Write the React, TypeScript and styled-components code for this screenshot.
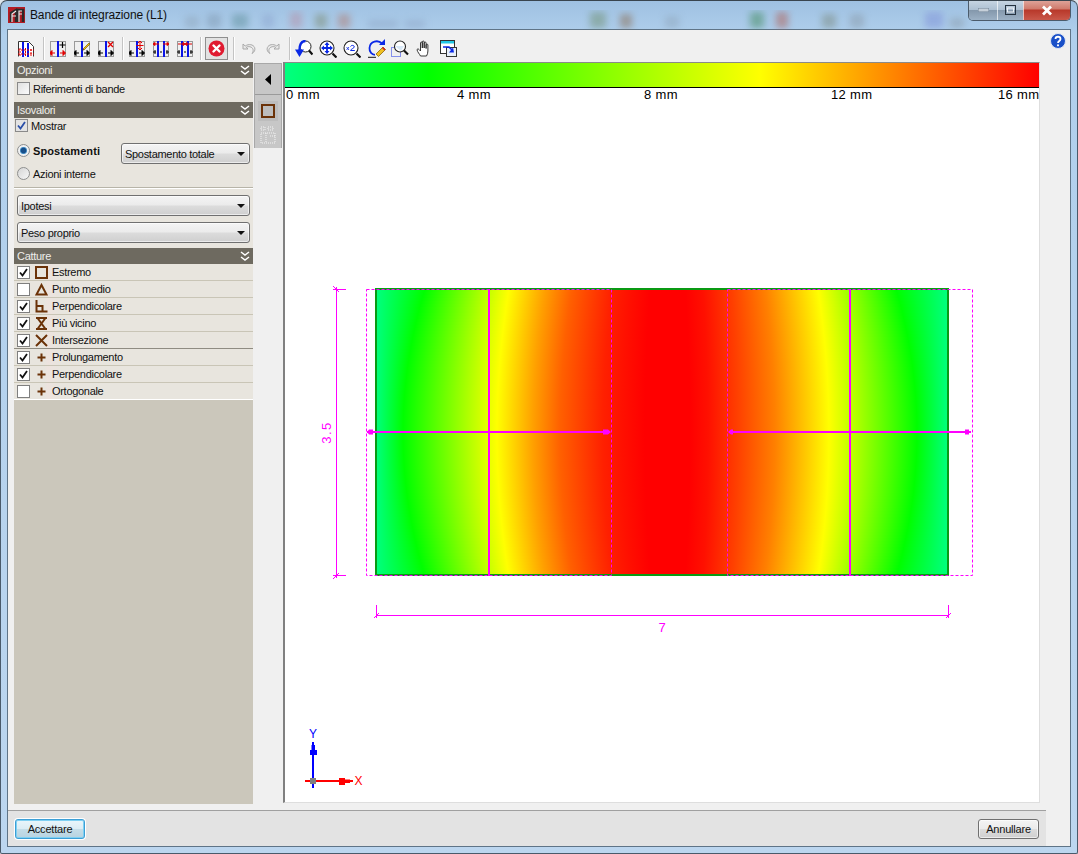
import React from 'react';
import styled, { createGlobalStyle } from 'styled-components';

const FONT = '"Liberation Sans", Arial, sans-serif';
const BROWN = '#6b3208';

const GlobalStyle = createGlobalStyle`
  html, body { margin: 0; padding: 0; background: #dfe6ec; }
  body { font-family: ${FONT}; font-size: 11px; letter-spacing: -0.3px; color: #111; }
`;

const Frame = styled.div`
  width: 1078px;
  height: 854px;
  box-sizing: border-box;
  display: flex;
  flex-direction: column;
  position: relative;
  overflow: hidden;
  padding: 0 6px 6px;
  border-radius: 7px 7px 2px 2px;
  border: 1px solid #4a5a6a;
  border-top-color: #39454f;
  background: linear-gradient(180deg, #9fc1e2 0%, #b0cfec 4%, #bcd6ef 100%);
`;

const TitleBar = styled.div`
  height: 28px;
  flex: none;
  display: flex;
  align-items: center;
  gap: 5px;
  padding-left: 1px;
  position: relative;
  color: #101010;
`;

const TitleGlass = styled.svg`
  position: absolute;
  left: -7px;
  top: -1px;
`;

const TitleText = styled.span`
  position: relative;
  font-size: 12px;
  letter-spacing: -0.15px;
`;

const AppIcon = styled.svg`
  position: relative;
  flex: none;
`;

const WindowButtons = styled.div`
  position: absolute;
  top: -1px;
  right: 0;
  height: 20px;
  display: flex;
  border: 1px solid #4b5b6b;
  border-top: none;
  border-radius: 0 0 5px 5px;
  overflow: hidden;
`;

const WinButton = styled.div<{ $w: number; $close?: boolean }>`
  width: ${p => p.$w}px;
  display: flex;
  align-items: center;
  justify-content: center;
  border-left: 1px solid rgba(255, 255, 255, 0.65);
  background: ${p =>
    p.$close
      ? 'linear-gradient(180deg, #e0a79d 0%, #d07a6c 45%, #b8382a 50%, #c9584a 100%)'
      : 'linear-gradient(180deg, #c8d6e3 0%, #adc0d2 48%, #8498ac 52%, #9cb1c5 100%)'};
  &:first-child { border-left: none; }
`;

const Client = styled.div`
  flex: 1;
  min-height: 0;
  display: flex;
  flex-direction: column;
  background: #f0f0f0;
  border: 1px solid #5f7487;
`;

const Toolbar = styled.div`
  height: 32px;
  flex: none;
  display: flex;
  align-items: center;
  padding: 5px 0 0 6px;
  box-sizing: border-box;
  position: relative;
`;

const ToolButton = styled.div<{ $active?: boolean }>`
  width: ${p => (p.$active ? 23 : 24)}px;
  height: ${p => (p.$active ? 23 : 24)}px;
  box-sizing: border-box;
  display: flex;
  align-items: center;
  justify-content: center;
  border: ${p => (p.$active ? '1px solid #8f8f8f' : 'none')};
  background: ${p => (p.$active ? '#e2e2e2' : 'transparent')};
`;

const ToolSep = styled.div<{ $l: number; $r: number }>`
  width: 1px;
  height: 23px;
  background: #c4c4c4;
  box-shadow: 1px 0 0 #fff;
  margin: 0 ${p => p.$r}px 0 ${p => p.$l}px;
`;

const HelpIcon = styled.svg`
  position: absolute;
  right: 4px;
  top: 3px;
`;

const Main = styled.div`
  flex: 1;
  min-height: 0;
  display: flex;
  padding-left: 6px;
`;

const Sidebar = styled.div`
  width: 239px;
  flex: none;
  display: flex;
  flex-direction: column;
  margin-bottom: 6px;
  background: #cbc7bb;
`;

const SectionHead = styled.div`
  height: 16px;
  flex: none;
  display: flex;
  align-items: center;
  justify-content: space-between;
  padding: 0 3px;
  background: #6e6a60;
  color: #eeeeea;
`;

const SectionBody = styled.div<{ $h: number }>`
  height: ${p => p.$h}px;
  flex: none;
  box-sizing: border-box;
  background: #e8e5de;
`;

const OptionRow = styled.div<{ $pad: number; $top?: number }>`
  display: flex;
  align-items: center;
  gap: 3px;
  height: 15px;
  padding: ${p => p.$top ?? 0}px 0 0 ${p => p.$pad}px;
`;

const Box = styled.span<{ $grey?: boolean }>`
  width: 11px;
  height: 11px;
  flex: none;
  display: inline-flex;
  align-items: center;
  justify-content: center;
  border: 1px solid #8a8a8a;
  background: ${p => (p.$grey ? '#e3e3e3' : 'linear-gradient(135deg, #e0e0e0, #fbfbfb)')};
`;

const Radio = styled.span<{ $on?: boolean }>`
  width: 11px;
  height: 11px;
  flex: none;
  border-radius: 50%;
  border: 1px solid #8e8f8f;
  background: ${p =>
    p.$on
      ? 'radial-gradient(circle, #174f8a 0 2.4px, #5fa6d8 3.4px, #eef0f2 4px)'
      : 'linear-gradient(135deg, #d5d5d5, #f7f7f7)'};
`;

const IsoGrid = styled.div`
  display: grid;
  grid-template-columns: 104px 129px;
  padding: 10px 0 0 3px;
  row-gap: 2px;
  align-items: start;
`;

const RadioRow = styled.div<{ $bold?: boolean }>`
  display: flex;
  align-items: center;
  gap: 3px;
  height: 15px;
  font-weight: ${p => (p.$bold ? 700 : 400)};
  letter-spacing: ${p => (p.$bold ? '0.1px' : '-0.3px')};
`;

const RadioLabel = styled.span`
  white-space: nowrap;
`;

const Select = styled.div<{ $w: number }>`
  width: ${p => p.$w}px;
  height: 21px;
  box-sizing: border-box;
  border: 1px solid #707070;
  border-radius: 3px;
  display: flex;
  align-items: center;
  justify-content: space-between;
  padding: 0 4px 0 3px;
  background: linear-gradient(180deg, #f4f4f4 0%, #ebebeb 48%, #dcdcdc 52%, #cfcfcf 100%);
  box-shadow: inset 0 0 0 1px rgba(255, 255, 255, 0.6);
`;

const Caret = styled.span`
  width: 0;
  height: 0;
  border-left: 4px solid transparent;
  border-right: 4px solid transparent;
  border-top: 4px solid #111;
`;

const SelectStack = styled.div`
  height: 61px;
  flex: none;
  box-sizing: border-box;
  background: #e8e5de;
  border-top: 1px solid #b7b4a8;
  box-shadow: inset 0 1px 0 #fff;
  display: flex;
  flex-direction: column;
  gap: 6px;
  padding: 7px 0 0 3px;
`;

const SnapRow = styled.div<{ $line?: string }>`
  height: 17px;
  flex: none;
  box-sizing: border-box;
  display: flex;
  align-items: center;
  padding-left: 3px;
  background: linear-gradient(90deg, #e8e5de 0 30px, #ede3de 34px, #e8e5de 46px);
  border-bottom: 1px solid ${p => p.$line ?? '#c9c5b6'};
`;

const SnapBox = styled.span`
  width: 11px;
  height: 11px;
  flex: none;
  display: inline-flex;
  align-items: center;
  justify-content: center;
  border: 1px solid #7f7f7f;
  background: #fff;
`;

const SnapGlyph = styled.svg`
  flex: none;
  margin: 0 4px 0 5px;
`;

const Strip = styled.div`
  width: 28px;
  height: 85px;
  flex: none;
  margin: 1px 0 0 1px;
  box-sizing: border-box;
  background: #c7c7c7;
  border: 1px solid #a8a8a8;
  border-bottom: none;
  display: flex;
  flex-direction: column;
  align-items: center;
`;

const StripToggle = styled.div`
  width: 100%;
  height: 30px;
  flex: none;
  display: flex;
  align-items: center;
  justify-content: center;
  border-bottom: 1px solid #9a9a9a;
`;

const StripTool = styled.div<{ $on?: boolean }>`
  width: 20px;
  height: 20px;
  margin-top: ${p => (p.$on ? 6 : 4)}px;
  display: flex;
  align-items: center;
  justify-content: center;
  background: ${p => (p.$on ? '#bdbdbd' : 'transparent')};
`;

const Canvas = styled.div`
  width: 757px;
  flex: none;
  margin: 0 0 7px 1px;
  box-sizing: border-box;
  background: #fff;
  border-left: 2px solid #808080;
  border-top: 1px solid #8a8a8a;
  border-right: 1px solid #dedede;
  border-bottom: 1px solid #dedede;
  display: flex;
  flex-direction: column;
`;

const LegendBar = styled.div`
  height: 25px;
  flex: none;
  box-sizing: border-box;
  border-bottom: 1px solid #000;
  background: linear-gradient(90deg, #00ff80 0%, #00ff00 19%, #ffff00 63%, #ff0000 100%);
`;

const LegendScale = styled.div`
  display: grid;
  grid-template-columns: 171px 187px 187px 167px auto;
  padding-left: 1px;
  font-size: 13px;
  line-height: 14px;
  letter-spacing: 0.35px;
  white-space: nowrap;
  color: #000;
`;

const Drawing = styled.svg`
  flex: none;
  display: block;
`;

const Footer = styled.div`
  height: 36px;
  flex: none;
  margin-right: 24px;
  box-sizing: border-box;
  border-top: 1px solid #a0a0a0;
  background: #e3e3e3;
  display: flex;
  align-items: center;
  justify-content: space-between;
  padding: 0 7px;
`;

const DialogButton = styled.div<{ $main?: boolean }>`
  height: 20px;
  box-sizing: border-box;
  width: ${p => (p.$main ? 70 : 61)}px;
  display: flex;
  align-items: center;
  justify-content: center;
  border-radius: 3px;
  letter-spacing: -0.2px;
  border: 1px solid ${p => (p.$main ? '#3c9fd6' : '#707070')};
  background: ${p =>
    p.$main
      ? 'linear-gradient(180deg, #eaf6fb 0%, #dcedf5 48%, #c4dde8 52%, #b8d3e0 100%)'
      : 'linear-gradient(180deg, #f4f4f4 0%, #ebebeb 48%, #dcdcdc 52%, #cfcfcf 100%)'};
  box-shadow: ${p => (p.$main ? '0 0 0 1px #fff, inset 0 0 0 1px #7fd0f2' : 'inset 0 0 0 1px rgba(255,255,255,.6)')};
`;

const UndoSvg = styled.svg<{ $flip?: boolean }>`
  transform: ${p => (p.$flip ? 'scaleX(-1)' : 'none')};
`;

// --- toolbar drawings

const Dots = () => (
  <rect x="0.5" y="0.5" width="15" height="15" fill="none" stroke="#444" strokeDasharray="1 1" />
);

const Arrow = ({ x, y, dir, color }: { x: number; y: number; dir: 1 | -1; color: string }) => (
  <path d={`M${x} ${y}h${dir * 3}M${x + dir * 3} ${y - 2.5}v5l${dir * 2.5}-2.5z`} stroke={color} fill={color} strokeWidth="1" />
);

const Bars = ({ xs }: { xs: number[] }) => (
  <>
    {xs.map(x => (
      <rect key={x} x={x} y="0" width="2" height="16" fill="#0a14e6" />
    ))}
  </>
);

type BandKind = 'add' | 'edit' | 'remove' | 'move' | 'spread' | 'gather';

const BandIcon = ({ kind }: { kind: BandKind }) => {
  const double = kind === 'spread' || kind === 'gather';
  const c = kind === 'add' ? '#e00000' : '#000';
  return (
    <svg width="16" height="16" viewBox="0 0 16 16">
      <Dots />
      {double ? <Bars xs={[4, 10]} /> : <Bars xs={[7]} />}
      {double ? (
        <>
          <path d="M0 11h3M2 9v4M13 11h3M14 9v4M7 11h2" stroke="#000" fill="none" />
          <path
            d={
              kind === 'spread'
                ? 'M2 3h4M2 1.500v3L0 3zM10 3h4M14 1.500v3L16 3z'
                : 'M1 3h5M6 1.500v3L8 3zM10 3h5M10 1.500v3L8 3z'
            }
            stroke="#e00000"
            fill="#e00000"
          />
        </>
      ) : (
        <>
          <Arrow x={5} y={12} dir={-1} color={c} />
          <Arrow x={10} y={12} dir={1} color={c} />
        </>
      )}
      {kind === 'add' && <path d="M12.500 1v6M9.500 4h6" stroke="#000" strokeWidth="1.200" />}
      {kind === 'edit' && (
        <>
          <path d="M9 8l6-6 1 1-6 6z" fill="#f3c21a" stroke="#7a5a00" strokeWidth="0.700" />
          <path d="M9 8l-1 2 2-1z" fill="#333" />
        </>
      )}
      {kind === 'remove' && <path d="M10 1l5 5M15 1l-5 5" stroke="#e00000" strokeWidth="1.300" />}
      {kind === 'move' && (
        <path d="M11 0v9M7.500 4.500h7M9 2l2-2 2 2M9 7l2 2 2-2" stroke="#e00000" fill="none" strokeWidth="1" />
      )}
    </svg>
  );
};

const BandsOverview = () => (
  <svg width="18" height="18" viewBox="0 0 18 18">
    <path d="M1.500 16.500V1.500h10l5 5v10" fill="#fff" stroke="#333" />
    <rect x="5" y="2" width="2" height="15" fill="#0a14e6" />
    <rect x="10" y="3" width="2" height="14" fill="#0a14e6" />
    <path d="M1 10h16M1 14h16M3 8v8M8.500 8v8M14 9v7" stroke="#e00000" strokeDasharray="2 1" fill="none" />
  </svg>
);

const StopIcon = () => (
  <svg width="17" height="17" viewBox="0 0 17 17">
    <circle cx="8.500" cy="8.500" r="8" fill="#e01a30" />
    <path d="M5.500 5.500l6 6M11.500 5.500l-6 6" stroke="#fff" strokeWidth="2.400" strokeLinecap="round" />
  </svg>
);

const UndoIcon = ({ flip }: { flip?: boolean }) => (
  <UndoSvg $flip={flip} width="14" height="12" viewBox="0 0 14 12">
    <path d="M1 1v5h5L4.300 4.300C6.500 3 10 3.500 11 6.500c.4 1.500-.2 3-1 4 2.400-1.300 3.500-3.700 2.600-6C11.300 1.500 7 .5 3.200 3z" fill="#e9e9e9" stroke="#a9a9a9" strokeWidth="1" />
  </UndoSvg>
);

const Lens = ({ cx = 7, cy = 7, r = 6 }: { cx?: number; cy?: number; r?: number }) => (
  <>
    <circle cx={cx} cy={cy} r={r} fill="#fff" stroke="#222" strokeWidth="1.100" />
    <path d={`M${cx + r - 1.500} ${cy + r - 1.500}l4 4`} stroke="#111" strokeWidth="2.200" />
  </>
);

const ZoomPrevious = () => (
  <svg width="18" height="18" viewBox="0 0 18 18">
    <circle cx="10.500" cy="6.500" r="5.500" fill="#fff" stroke="#222" />
    <path d="M14 10.500l3.500 4" stroke="#111" strokeWidth="2.200" />
    <path d="M10.500 1C6 1 4.500 5 4.500 10" fill="none" stroke="#0a28e6" strokeWidth="2.400" />
    <path d="M0 9.500h9L4.500 17z" fill="#0a28e6" />
  </svg>
);

const ZoomAll = () => (
  <svg width="18" height="18" viewBox="0 0 18 18">
    <Lens cx={8} cy={8} r={7} />
    <path d="M8 4v8M4 8h8" stroke="#0a28e6" strokeWidth="1.800" />
    <path d="M5.500 5L8 2l2.500 3zM5.500 11L8 14l2.500-3zM5 5.500L2 8l3 2.500zM11 5.500L14 8l-3 2.500z" fill="#0a28e6" />
  </svg>
);

const ZoomDouble = () => (
  <svg width="18" height="18" viewBox="0 0 18 18">
    <Lens cx={8} cy={8} r={7} />
    <path d="M3.500 7l2.500 3M6 7l-2.500 3" stroke="#0a28e6" strokeWidth="0.800" />
    <path d="M7.500 6.500c.5-1.500 3.800-1.500 3.800.3 0 1.400-3.300 2-3.800 3.700h4.300" stroke="#0a28e6" strokeWidth="1" fill="none" />
  </svg>
);

const ZoomRefresh = () => (
  <svg width="19" height="19" viewBox="0 0 19 19">
    <path d="M15 4.500C11 .5 3 2 2.500 9c-.3 4 2.500 6.500 5.500 6.800" fill="none" stroke="#0a28e6" strokeWidth="1.800" />
    <path d="M12 6h6V0z" fill="#0a28e6" />
    <path d="M9 15l7-7 2.500 2.500-7 7z" fill="#f0c020" stroke="#7a5a00" strokeWidth="0.700" />
    <path d="M1 18.300h8" stroke="#111" />
    <path d="M15.500 8.500l2.500 2.500" stroke="#d02020" strokeWidth="1.500" />
  </svg>
);

const ZoomWindow = () => (
  <svg width="18" height="18" viewBox="0 0 18 18">
    <rect x="0.500" y="7.500" width="9" height="9" fill="none" stroke="#1a30e6" strokeDasharray="1 1" />
    <Lens cx={9} cy={6.500} r={5.500} />
    <path d="M4 6h9l-3 5z" fill="#cfe3f5" opacity="0.800" />
  </svg>
);

const HandIcon = () => (
  <svg width="17" height="17" viewBox="0 0 16 17">
    <path d="M4 16c-1-2-3-4-3.400-6-.2-1.200 1.200-1.400 2-.4L4 11V3c0-1.300 1.800-1.300 1.800 0v5-6c0-1.300 1.900-1.300 1.900 0v6-5c0-1.300 1.900-1.300 1.900 0v5.500V5c0-1.200 1.800-1.200 1.800 0v6c0 2-.6 3.500-1.400 5z" fill="#fff" stroke="#222" strokeWidth="0.900" />
  </svg>
);

const ViewWindow = () => (
  <svg width="17" height="17" viewBox="0 0 17 17">
    <rect x="0.500" y="0.500" width="14" height="13" fill="#fff" stroke="#333" />
    <rect x="1" y="1" width="13" height="2.500" fill="#22c8e6" />
    <rect x="6.500" y="7.500" width="10" height="9" fill="#e8f0fa" stroke="#333" />
    <path d="M3 7h6l3 3" fill="none" stroke="#0a28e6" strokeWidth="1.600" />
    <path d="M9 12.500l5 0-1-5z" fill="#0a28e6" />
  </svg>
);

const Chevrons = () => (
  <svg width="10" height="11" viewBox="0 0 10 11">
    <path d="M1 1l4 3 4-3M1 6l4 3 4-3" fill="none" stroke="#fff" strokeWidth="1.500" />
  </svg>
);

const Tick = ({ color = '#111' }: { color?: string }) => (
  <svg width="9" height="9" viewBox="0 0 9 9">
    <path d="M1 4.500l2.500 3L8 1" fill="none" stroke={color} strokeWidth="1.800" />
  </svg>
);

type SnapKind = 'square' | 'triangle' | 'perp' | 'hour' | 'cross' | 'plus';

const SnapIcon = ({ kind }: { kind: SnapKind }) => (
  <SnapGlyph width="13" height="13" viewBox="0 0 13 13">
    {kind === 'square' && <rect x="1" y="1" width="11" height="11" fill="none" stroke={BROWN} strokeWidth="2" />}
    {kind === 'triangle' && <path d="M6.500 2L1.500 11.500h10z" fill="none" stroke={BROWN} strokeWidth="2" />}
    {kind === 'perp' && <path d="M1.500 0v11.500h11M1.500 6h6v5" fill="none" stroke={BROWN} strokeWidth="2" />}
    {kind === 'hour' && <path d="M1 1h11M1 12h11M2.500 1l8 11M10.500 1l-8 11" fill="none" stroke={BROWN} strokeWidth="2" />}
    {kind === 'cross' && <path d="M1 1l11 11M12 1L1 12" fill="none" stroke={BROWN} strokeWidth="2" />}
    {kind === 'plus' && <path d="M6.500 2.500v8M2.500 6.500h8" fill="none" stroke={BROWN} strokeWidth="2" />}
  </SnapGlyph>
);

// --- heat map

const lerp = (a: number, b: number, s: number) => a + (b - a) * s;

// colour, x at mid height, x at the top and bottom edges
const HEAT_STOPS: [string, number, number][] = [
  ['#00ff80', 376, 376],
  ['#00ff00', 403, 425],
  ['#ffff00', 497, 509],
  ['#ffa000', 533, 545],
  ['#ff6000', 560, 572],
  ['#ff2000', 603, 612],
  ['#ff1000', 622, 630],
  ['#ff0000', 645, 650],
  ['#ff0000', 690, 685],
  ['#ff1000', 708, 703],
  ['#ff4000', 738, 732],
  ['#ff8000', 775, 765],
  ['#ffff00', 829, 818],
  ['#00ff00', 917, 896],
  ['#00ff80', 948, 948],
];

const ROW_H = 3;
const rows = Array.from({ length: 96 }, (_, i) => i);

const HeatMap = () => (
  <>
    <defs>
      {rows.map(i => {
        const t = (i + 0.5 - rows.length / 2) / (rows.length / 2);
        const s = t * t;
        return (
          <linearGradient key={i} id={`heat${i}`} gradientUnits="userSpaceOnUse" x1="376" x2="948" y1="0" y2="0">
            {HEAT_STOPS.map(([color, mid, edge], k) => (
              <stop key={k} offset={(lerp(mid, edge, s) - 376) / 572} stopColor={color} />
            ))}
          </linearGradient>
        );
      })}
    </defs>
    {rows.map(i => (
      <rect key={i} x="376" y={289 + i * ROW_H} width="572" height={i === 95 ? 1 : ROW_H + 0.5} fill={`url(#heat${i})`} />
    ))}
  </>
);

const PINK = '#ff00ff';

const Plan = () => (
  // viewBox in window pixels so the drawing reads the same as the dialog
  <Drawing viewBox="285 102 754 700" width="754" height="700">
    <HeatMap />
    <rect x="376" y="289" width="572" height="286" fill="none" stroke="#0a9a14" strokeWidth="2" />

    <rect x="366.500" y="289.500" width="245" height="286" fill="none" stroke={PINK} strokeDasharray="3 2" />
    <rect x="727.500" y="289.500" width="245" height="286" fill="none" stroke={PINK} strokeDasharray="3 2" />

    <path d="M489 289v287M850 289v287" stroke={PINK} strokeWidth="2" />
    <path d="M367 432h243M729 432h242" stroke={PINK} strokeWidth="2" />
    <path d="M369 429.500h4v5h-4l-2-2.500zM603 429.500h5l3 2.500-3 2.500h-5zM733 429.500h-2l-3 2.500 3 2.500h2zM965 429.500h4v2l2 .5-2 .5v2h-4z" fill={PINK} />

    <path d="M336.500 287v291M333 289.500h13M333 575.500h13M333 286l6 6M333 579l6-6" stroke={PINK} fill="none" />
    <text x="331" y="432.500" transform="rotate(-90 331 432.500)" textAnchor="middle" fontSize="13" letterSpacing="1.500" fill={PINK} fontFamily={FONT}>3.5</text>

    <path d="M376 615.500h573M376.500 605v13M948.500 605v13M374 618l5-5M946 618l5-5" stroke={PINK} fill="none" />
    <text x="662" y="632" textAnchor="middle" fontSize="13" letterSpacing="0" fill={PINK} fontFamily={FONT}>7</text>

    <path d="M305 781h48" stroke="#ff0000" strokeWidth="2" />
    <path d="M339 778h6v1.500h5v3.500h-5v2h-6z" fill="#ff0000" />
    <path d="M313 742v46" stroke="#0000ff" strokeWidth="2" />
    <path d="M310 755v-5h1.500v-5h1v-3h1v3h1.500v5h2v5z" fill="#0000ff" />
    <rect x="310" y="778" width="6" height="6" fill="#808080" />
    <text x="354.500" y="785" fontSize="12" letterSpacing="0" fill="#ff0000" fontFamily={FONT}>X</text>
    <text x="309" y="738" fontSize="12" letterSpacing="0" fill="#0000ff" fontFamily={FONT}>Y</text>
  </Drawing>
);

const snaps: { label: string; on: boolean; kind: SnapKind; line?: string }[] = [
  { label: 'Estremo', on: true, kind: 'square' },
  { label: 'Punto medio', on: false, kind: 'triangle' },
  { label: 'Perpendicolare', on: true, kind: 'perp' },
  { label: 'Più vicino', on: true, kind: 'hour' },
  { label: 'Intersezione', on: true, kind: 'cross', line: '#8f8c82' },
  { label: 'Prolungamento', on: true, kind: 'plus' },
  { label: 'Perpendicolare', on: true, kind: 'plus' },
  { label: 'Ortogonale', on: false, kind: 'plus', line: '#fff' },
];

// what the glass lets through of the window behind the dialog
const glassBlobs: [number, number, number, string][] = [
  [185, 14, 12, '#8fa5bb'],
  [207, 14, 14, '#7f98b0'],
  [232, 16, 14, '#5f8f9a'],
  [262, 12, 14, '#8da5cf'],
  [290, 12, 16, '#b58fa5'],
  [315, 12, 14, '#7a8a70'],
  [338, 12, 14, '#b07a70'],
  [368, 30, 8, '#8da5c5'],
  [405, 20, 8, '#8da5c5'],
  [590, 16, 16, '#6f8f70'],
  [620, 12, 14, '#8a6a50'],
  [665, 14, 12, '#8fa5bb'],
  [750, 14, 16, '#3f8a5a'],
  [776, 12, 16, '#b05a50'],
  [822, 14, 14, '#7a8a80'],
  [850, 14, 14, '#8a9aa8'],
  [925, 18, 16, '#7f90d8'],
  [950, 14, 10, '#8a9aa8'],
];

export default function App() {
  return (
    <>
      <GlobalStyle />
      <Frame>
        <TitleBar>
          <TitleGlass width="1078" height="30" viewBox="0 0 1078 30">
            <defs>
              <filter id="glassBlur"><feGaussianBlur stdDeviation="3.500" /></filter>
            </defs>
            <g filter="url(#glassBlur)" opacity="0.5">
              {glassBlobs.map(([x, w, h, fill]) => (
                <rect key={x} x={x} y={28 - h} width={w} height={h} fill={fill} />
              ))}
            </g>
          </TitleGlass>
          <AppIcon width="17" height="16" viewBox="0 0 17 16">
            <rect width="17" height="16" fill="#b41c24" />
            <path d="M3 15V6l5-3v12M10 15V3h5v12" fill="none" stroke="#2a2a2a" strokeWidth="2.400" />
            <path d="M4 15V7l4-3M11 15V4h3M4 9h4M11 7h3" fill="none" stroke="#e8e8e8" strokeWidth="1.200" />
          </AppIcon>
          <TitleText>Bande di integrazione (L1)</TitleText>
          <WindowButtons>
            <WinButton $w={28}>
              <svg width="11" height="4"><rect width="11" height="4" fill="#c6d0da" stroke="#6f8296" /></svg>
            </WinButton>
            <WinButton $w={25}>
              <svg width="11" height="10"><rect x="0.500" y="0.500" width="10" height="9" fill="none" stroke="#25323f" /><rect x="2.500" y="3" width="6" height="4" fill="none" stroke="#eef2f6" /></svg>
            </WinButton>
            <WinButton $w={46} $close>
              <svg width="12" height="11" viewBox="0 0 12 11"><path d="M2 1.500l8 8M10 1.500l-8 8" stroke="#fff" strokeWidth="2.800" /></svg>
            </WinButton>
          </WindowButtons>
        </TitleBar>
        <Client>
          <Toolbar>
            <ToolButton><BandsOverview /></ToolButton>
            <ToolSep $l={5} $r={2} />
            <ToolButton><BandIcon kind="add" /></ToolButton>
            <ToolButton><BandIcon kind="edit" /></ToolButton>
            <ToolButton><BandIcon kind="remove" /></ToolButton>
            <ToolSep $l={4} $r={2} />
            <ToolButton><BandIcon kind="move" /></ToolButton>
            <ToolButton><BandIcon kind="spread" /></ToolButton>
            <ToolButton><BandIcon kind="gather" /></ToolButton>
            <ToolSep $l={3} $r={4} />
            <ToolButton $active><StopIcon /></ToolButton>
            <ToolSep $l={5} $r={3} />
            <ToolButton><UndoIcon /></ToolButton>
            <ToolButton><UndoIcon flip /></ToolButton>
            <ToolSep $l={4} $r={2} />
            <ToolButton><ZoomPrevious /></ToolButton>
            <ToolButton><ZoomAll /></ToolButton>
            <ToolButton><ZoomDouble /></ToolButton>
            <ToolButton><ZoomRefresh /></ToolButton>
            <ToolButton><ZoomWindow /></ToolButton>
            <ToolButton><HandIcon /></ToolButton>
            <ToolButton><ViewWindow /></ToolButton>
            <HelpIcon width="16" height="16" viewBox="0 0 16 16">
              <circle cx="8" cy="8" r="7.500" fill="#1a50c8" stroke="#dfe6f2" />
              <path d="M5.500 6c0-3 5-3 5 0 0 2-2.500 2-2.500 4" fill="none" stroke="#fff" strokeWidth="1.800" />
              <circle cx="8" cy="12.300" r="1.100" fill="#fff" />
            </HelpIcon>
          </Toolbar>
          <Main>
            <Sidebar>
              <SectionHead>Opzioni<Chevrons /></SectionHead>
              <SectionBody $h={24}>
                <OptionRow $pad={3} $top={3}>
                  <Box />
                  <span>Riferimenti di bande</span>
                </OptionRow>
              </SectionBody>
              <SectionHead>Isovalori<Chevrons /></SectionHead>
              <SectionBody $h={69}>
                <OptionRow $pad={1}>
                  <Box $grey><Tick color="#2a4fa8" /></Box>
                  <span>Mostrar</span>
                </OptionRow>
                <IsoGrid>
                  <RadioRow $bold><Radio $on /><RadioLabel>Spostamenti</RadioLabel></RadioRow>
                  <Select $w={129}>Spostamento totale<Caret /></Select>
                  <RadioRow><Radio /><RadioLabel>Azioni interne</RadioLabel></RadioRow>
                </IsoGrid>
              </SectionBody>
              <SelectStack>
                <Select $w={233}>Ipotesi<Caret /></Select>
                <Select $w={233}>Peso proprio<Caret /></Select>
              </SelectStack>
              <SectionHead>Catture<Chevrons /></SectionHead>
              {snaps.map((s, i) => (
                <SnapRow key={i} $line={s.line}>
                  <SnapBox>{s.on && <Tick />}</SnapBox>
                  <SnapIcon kind={s.kind} />
                  {s.label}
                </SnapRow>
              ))}
            </Sidebar>
            <Strip>
              <StripToggle>
                <svg width="6" height="11"><path d="M6 0v11L0 5.500z" fill="#000" /></svg>
              </StripToggle>
              <StripTool $on>
                <svg width="14" height="14"><rect x="1" y="1" width="12" height="12" fill="none" stroke={BROWN} strokeWidth="2" /></svg>
              </StripTool>
              <StripTool>
                <svg width="16" height="18" viewBox="0 0 16 18">
                  <path d="M1 1h4v3H1zM8 1h5v3H8zM1 7h14v10H1zM6 7v10M10 10h5" fill="none" stroke="#f4f4f4" strokeDasharray="1 1" />
                </svg>
              </StripTool>
            </Strip>
            <Canvas>
              <LegendBar />
              <LegendScale>
                <span>0 mm</span>
                <span>4 mm</span>
                <span>8 mm</span>
                <span>12 mm</span>
                <span>16 mm</span>
              </LegendScale>
              <Plan />
            </Canvas>
          </Main>
          <Footer>
            <DialogButton $main>Accettare</DialogButton>
            <DialogButton>Annullare</DialogButton>
          </Footer>
        </Client>
      </Frame>
    </>
  );
}
